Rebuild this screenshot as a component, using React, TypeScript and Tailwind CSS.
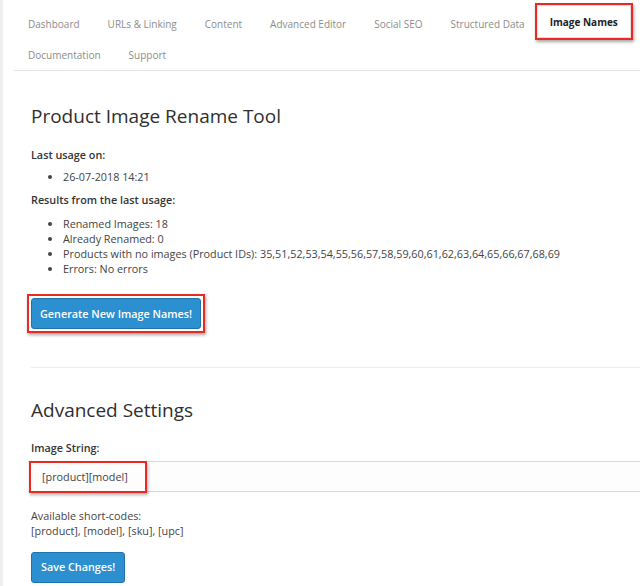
const tabs = ['Dashboard', 'URLs & Linking', 'Content', 'Advanced Editor', 'Social SEO', 'Structured Data'];

const ids = '35,51,52,53,54,55,56,57,58,59,60,61,62,63,64,65,66,67,68,69';

function Tab({ label, tall }: { label: string; tall?: boolean }) {
  return (
    <a className={`flex ${tall ? 'h-[32px]' : 'h-[30px]'} items-center px-[14px] text-[#8c8c8c] cursor-pointer`}>
      {label}
    </a>
  );
}

export default function App() {
  return (
    <div className="min-h-[586px] border-l-[3px] border-[#efefef] bg-white text-[10.8px] text-[#444] font-['Open_Sans',sans-serif]">
      <nav className="ml-[11px] flex flex-wrap items-end border-b border-[#e5e5e5] pt-[3px] text-[10px]">
        {tabs.map((t) => (
          <Tab key={t} label={t} tall />
        ))}
        <div className="-ml-[4px] border-2 border-[#ea2a22] shadow-[1px_2px_3px_rgba(0,0,0,0.35)]">
          <div className="flex h-[33px] items-center border border-[#e2e2e2] bg-white px-[12px] pt-[2px] font-bold text-[#222]">
            Image Names
          </div>
        </div>
        <Tab label="Documentation" />
        <Tab label="Support" />
      </nav>

      <main className="pl-[28px]">
        <h1 className="pt-[31px] text-[19px] leading-[28px] text-[#2f2f2f]">Product Image Rename Tool</h1>

        <h3 className="mt-[17px] font-semibold text-[#333]">Last usage on:</h3>
        <ul className="mt-[6px] list-disc pl-[32px] leading-[15px]">
          <li>26-07-2018 14:21</li>
        </ul>
        <h3 className="mt-[8px] font-semibold text-[#333]">Results from the last usage:</h3>
        <ul className="mt-[8px] list-disc pl-[32px] leading-[15px]">
          <li>Renamed Images: 18</li>
          <li>Already Renamed: 0</li>
          <li>Products with no images (Product IDs): {ids}</li>
          <li>Errors: No errors</li>
        </ul>

        <div className="mt-[18px] inline-block -ml-[4px] border-2 border-[#ea2a22] p-[2px] shadow-[1px_2px_3px_rgba(0,0,0,0.35)]">
          <button className="h-[31px] rounded-[3px] border border-[#1f74aa] bg-[#2b8fd0] px-[8px] font-semibold text-white">
            Generate New Image Names!
          </button>
        </div>

        <hr className="mt-[34px] border-[#ececec]" />

        <h1 className="pt-[28px] text-[19px] leading-[28px] text-[#2f2f2f]">Advanced Settings</h1>

        <h3 className="mt-[16px] font-semibold text-[#333]">Image String:</h3>
        <div className="relative mt-[4px] -ml-[3px] h-[31px] border-y border-[#d9d9d9] bg-[#fdfdfd]">
          <div className="absolute -top-px left-[1px] h-[32px] w-[118px] border-2 border-[#ea2a22] shadow-[1px_2px_3px_rgba(0,0,0,0.3)]" />
          <input
            readOnly
            value="[product][model]"
            className="h-full w-full bg-transparent pl-[14px] text-[10.8px] text-[#444] outline-none"
          />
        </div>

        <p className="mt-[16px] leading-[15px]">
          Available short-codes:
          <br />
          [product], [model], [sku], [upc]
        </p>

        <button className="mt-[14px] h-[31px] rounded-[3px] border border-[#1f74aa] bg-[#2b8fd0] px-[9px] font-semibold text-white">
          Save Changes!
        </button>
      </main>
    </div>
  );
}
